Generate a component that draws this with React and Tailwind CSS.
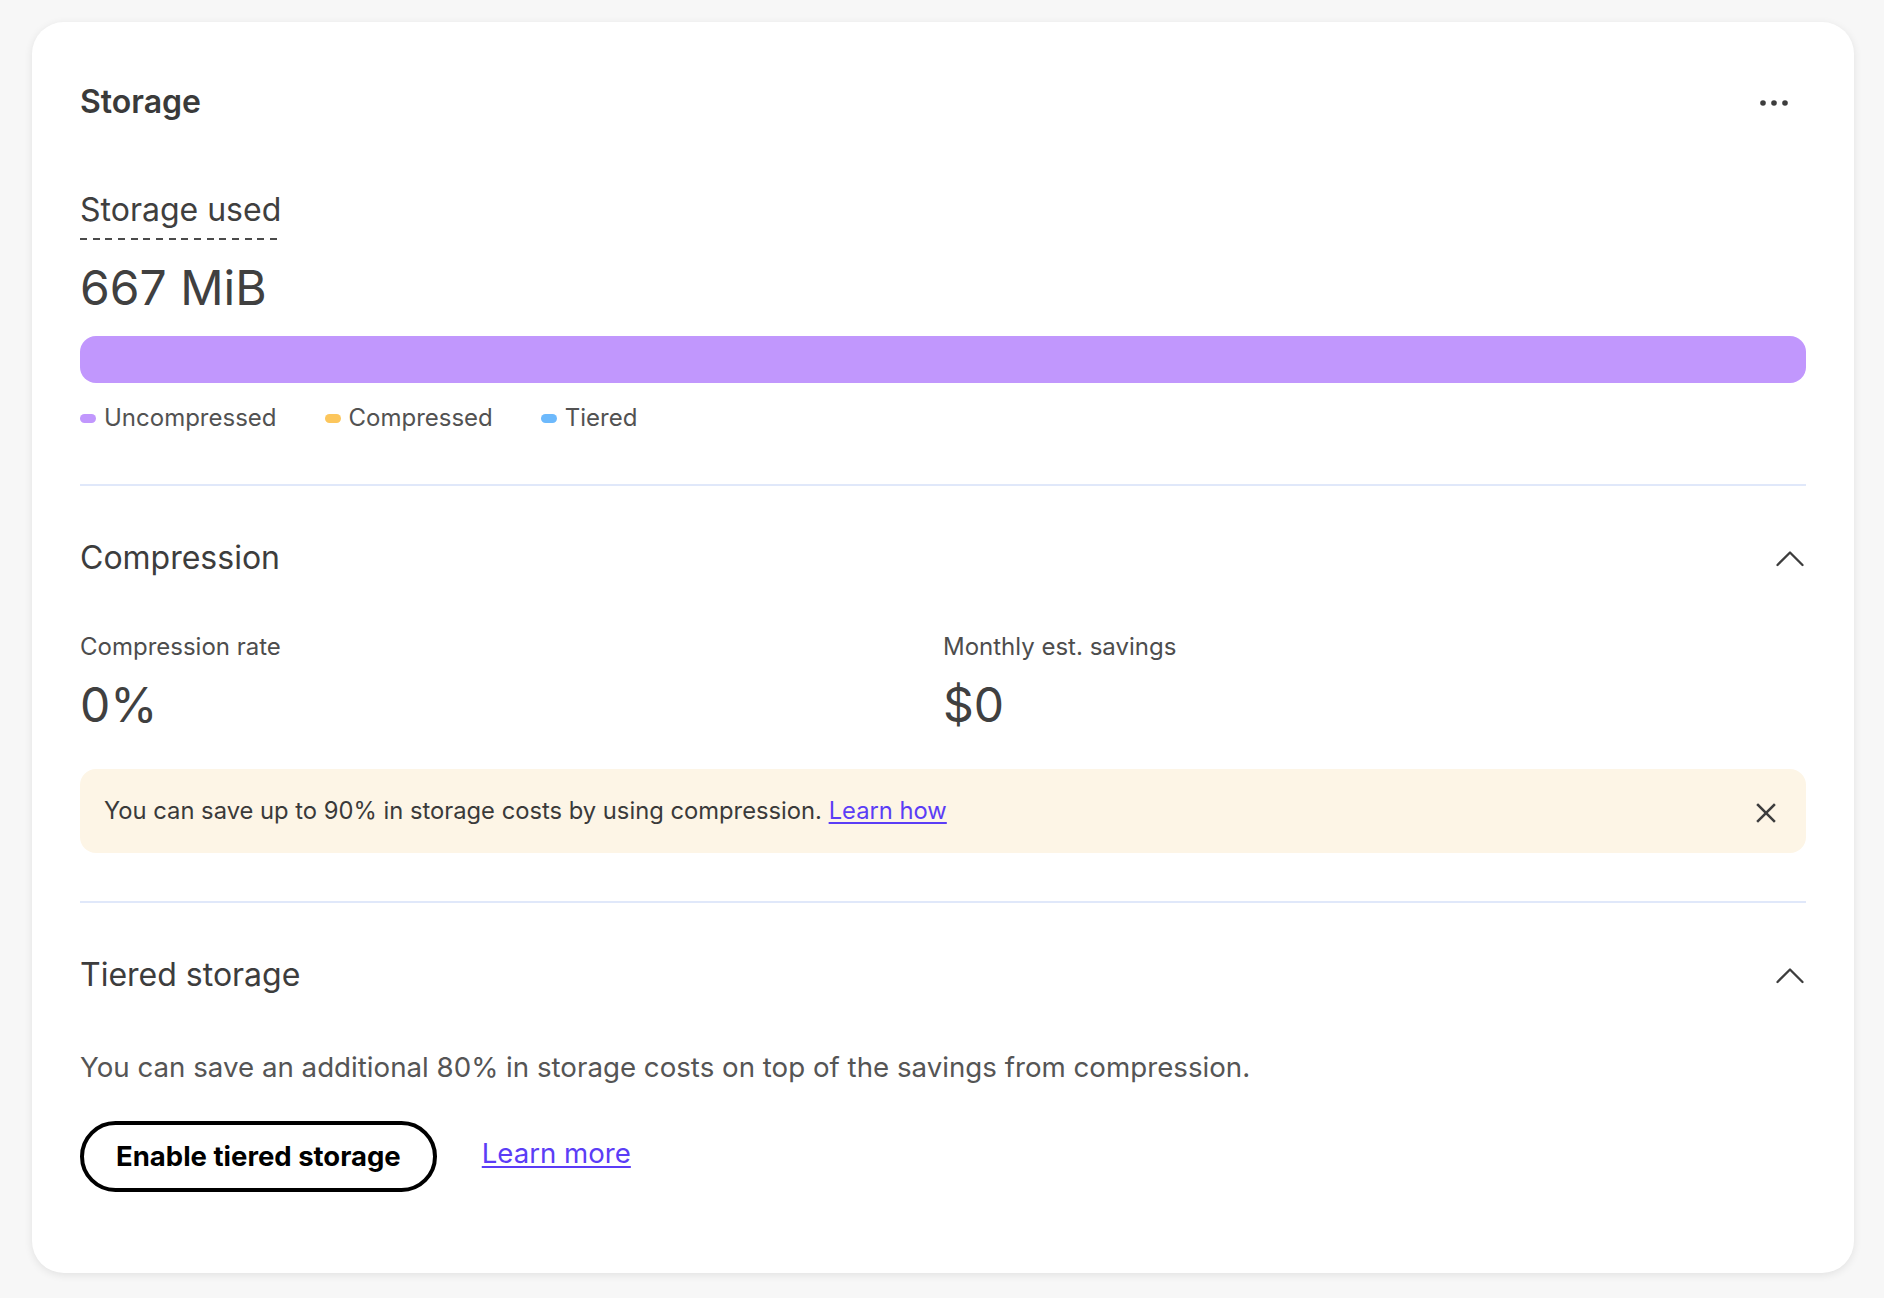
import { useState } from 'react'

function Chevron() {
  return (
    <svg width="28" height="17" viewBox="0 0 28 17" fill="none" stroke="#3d3d3d" strokeWidth="2.3" strokeLinecap="round" strokeLinejoin="round">
      <polyline points="1.5,15 14,2.5 26.5,15" />
    </svg>
  )
}

function Section({ title, children, first }) {
  const [open, setOpen] = useState(true)
  return (
    <div className={first ? '' : 'border-t-2 border-[#e0e8fa]'}>
      <div className="mt-[52px] flex items-center justify-between">
        <h2 className="text-[32px] leading-[40px] text-[#3d3d3d]">{title}</h2>
        <button onClick={() => setOpen(!open)} className="mr-[2px] flex items-center">
          <Chevron />
        </button>
      </div>
      {open && children}
    </div>
  )
}

const legend = [
  { label: 'Uncompressed', color: 'bg-[#c197fd]' },
  { label: 'Compressed', color: 'bg-[#fcc65c]' },
  { label: 'Tiered', color: 'bg-[#6db9fc]' },
]

export default function App() {
  const [showTip, setShowTip] = useState(true)
  return (
    <div className="min-h-screen bg-[#f7f7f7] pl-[32px] pr-[30px] pt-[22px] pb-[26px] font-['Inter','Noto_Sans',sans-serif]">
      <div className="rounded-[32px] bg-white px-[48px] pt-[60px] pb-[81px] shadow-[0_2px_9px_rgba(0,0,0,0.09)]">
        <div className="flex items-center justify-between">
          <h1 className="text-[32px] leading-[40px] font-semibold text-[#3a3a3a]">Storage</h1>
          <button className="mr-[18px] mt-[2px]">
            <svg width="28" height="6" viewBox="0 0 28 6" fill="#3d3d3d">
              <circle cx="3" cy="3" r="2.8" />
              <circle cx="14" cy="3" r="2.8" />
              <circle cx="25" cy="3" r="2.8" />
            </svg>
          </button>
        </div>

        <div className="mt-[68px] inline-block">
          <p className="text-[32px] leading-[40px] text-[#3f3f3f]">Storage used</p>
          <div className="mt-[8px] h-[2px] w-full bg-[repeating-linear-gradient(90deg,#4a4a4a_0px,#4a4a4a_7px,transparent_7px,transparent_12.67px)]" />
        </div>
        <p className="mt-[20px] text-[48px] leading-[56px] text-[#404040]">667 MiB</p>

        <div className="mt-[20px] h-[47px] rounded-[16px] bg-[#c197fd]" />

        <div className="mt-[19px] flex gap-[48px] pb-[50px]">
          {legend.map(({ label, color }) => (
            <div key={label} className="flex items-center gap-[8px]">
              <span className={`h-[9px] w-[16px] rounded-full ${color}`} />
              <span className="text-[24px] leading-[32px] text-[#525252]">{label}</span>
            </div>
          ))}
        </div>

        <Section title="Compression">
          <div className="mt-[53px] grid grid-cols-2">
            <div>
              <p className="text-[24px] leading-[32px] text-[#4d4d4d]">Compression rate</p>
              <p className="mt-[14px] text-[48px] leading-[56px] text-[#404040]">0%</p>
            </div>
            <div>
              <p className="text-[24px] leading-[32px] text-[#4d4d4d]">Monthly est. savings</p>
              <p className="mt-[14px] text-[48px] leading-[56px] text-[#404040]">$0</p>
            </div>
          </div>
          {showTip && (
            <div className="mt-[36px] flex h-[84px] items-center justify-between rounded-[16px] bg-[#fdf5e6] pl-[24px] pr-[30px]">
              <p className="text-[23.75px] leading-[32px] text-[#3a3a3a]">
                You can save up to 90% in storage costs by using compression.{' '}
                <a href="#" className="text-[#5b3df6] underline decoration-[1.5px] underline-offset-[3px]">Learn how</a>
              </p>
              <button onClick={() => setShowTip(false)} className="mt-[3px]">
                <svg width="20" height="20" viewBox="0 0 20 20" fill="none" stroke="#3d3d3d" strokeWidth="2.5" strokeLinecap="square">
                  <line x1="2" y1="2" x2="18" y2="18" />
                  <line x1="18" y1="2" x2="2" y2="18" />
                </svg>
              </button>
            </div>
          )}
          <div className="h-[48px]" />
        </Section>

        <Section title="Tiered storage">
          <p className="mt-[54px] text-[27.7px] leading-[36px] text-[#555555]">
            You can save an additional 80% in storage costs on top of the savings from compression.
          </p>
          <div className="mt-[36px] flex items-center gap-[45px]">
            <button className="flex h-[71px] items-center rounded-full border-[4px] border-black px-[32px] text-[27.5px] font-bold text-black">
              Enable tiered storage
            </button>
            <a href="#" className="pb-[7px] text-[27.6px] leading-[36px] text-[#5b3df6] underline decoration-[1.5px] underline-offset-[3px]">Learn more</a>
          </div>
        </Section>
      </div>
    </div>
  )
}
